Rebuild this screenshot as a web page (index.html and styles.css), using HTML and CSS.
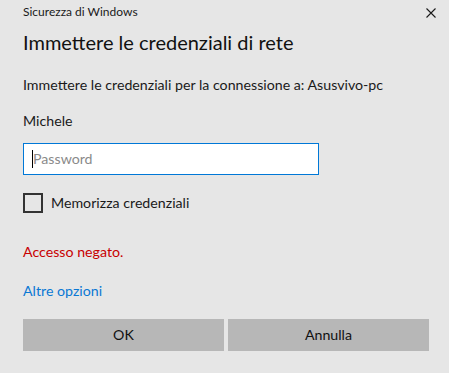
FILE: index.html
```html
<!DOCTYPE html>
<html lang="it">
<head>
<meta charset="utf-8">
<title>Sicurezza di Windows</title>
<link rel="stylesheet" href="styles.css">
</head>
<body>
<div class="dialog">
  <div class="titlebar">
    <span class="app-title">Sicurezza di Windows</span>
    <svg class="close" width="10" height="10" viewBox="0 0 10 10" aria-label="Chiudi">
      <path d="M0.5 0.5 L9.5 9.5 M9.5 0.5 L0.5 9.5" stroke="#1a1a1a" stroke-width="1.1" fill="none"/>
    </svg>
  </div>
  <div class="content">
    <h1 class="heading">Immettere le credenziali di rete</h1>
    <p class="line desc">Immettere le credenziali per la connessione a: Asusvivo-pc</p>
    <p class="line user">Michele</p>
    <div class="field">
      <span class="caret"></span><span class="placeholder">Password</span>
    </div>
    <label class="remember">
      <span class="checkbox"></span>
      <span class="remember-text">Memorizza credenziali</span>
    </label>
    <p class="line error">Accesso negato.</p>
    <p class="line more">Altre opzioni</p>
    <div class="buttons">
      <div class="btn">OK</div>
      <div class="btn">Annulla</div>
    </div>
  </div>
</div>
</body>
</html>
```
FILE: styles.css
```css
html, body {
  margin: 0;
  padding: 0;
  background: #e6e6e6;
}
body {
  font-family: Lato, "Noto Sans", sans-serif;
  color: #1a1a1a;
}
.dialog {
  width: 449px;
  height: 373px;
  background: #e6e6e6;
}
.titlebar {
  display: flex;
  align-items: flex-start;
  justify-content: space-between;
  padding: 2px 13px 0 23px;
  height: 20px;
}
.app-title {
  font-size: 12px;
  line-height: 20px;
  color: #1a1a1a;
}
.close {
  display: block;
  margin-top: 6px;
}
.content {
  padding: 0 20px 0 23px;
}
.heading {
  margin: 6px 0 0;
  font-size: 20px;
  font-weight: normal;
  line-height: 28px;
  color: #111;
}
.line {
  margin: 0;
  font-size: 14.2px;
  line-height: 20px;
  white-space: nowrap;
}
.desc { margin-top: 19px; }
.user { margin-top: 16px; }
.field {
  margin-top: 12px;
  box-sizing: border-box;
  width: 296px;
  height: 32px;
  border: 1px solid #0078d7;
  background: #fff;
  display: flex;
  align-items: center;
  padding-left: 8px;
}
.caret {
  width: 1px;
  height: 18px;
  background: #000;
}
.placeholder {
  font-size: 14.2px;
  color: #8a8a8a;
  line-height: 20px;
}
.remember {
  margin-top: 18px;
  display: flex;
  align-items: center;
  height: 20px;
}
.checkbox {
  width: 16px;
  height: 16px;
  border: 2px solid #333;
  box-sizing: content-box;
}
.remember-text {
  margin-left: 8px;
  font-size: 14.2px;
  line-height: 20px;
}
.error {
  margin-top: 29px;
  color: #c80000;
}
.more {
  margin-top: 19px;
  color: #0a78d4;
}
.buttons {
  margin-top: 18px;
  display: grid;
  grid-template-columns: 1fr 1fr;
  gap: 4px;
  width: 406px;
}
.btn {
  height: 32px;
  background: #b7b7b7;
  display: flex;
  align-items: center;
  justify-content: center;
  font-size: 14.2px;
  line-height: 20px;
  color: #111;
}
```
